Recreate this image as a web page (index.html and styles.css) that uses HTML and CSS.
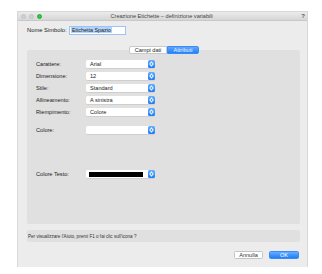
FILE: index.html
```html
<!DOCTYPE html>
<html lang="it">
<head>
  <meta charset="UTF-8">
  <title>Creazione Etichette</title>
  <link rel="stylesheet" href="styles.css">
</head>
<body>
  <div class="window">
    <div class="titlebar">
      <div class="lights">
        <span class="light"></span>
        <span class="light"></span>
        <span class="light green"></span>
      </div>
      <div class="title">Creazione Etichette – definizione variabili</div>
      <div class="help-q">?</div>
    </div>

    <div class="name-row">
      <label>Nome Simbolo:</label>
      <div class="name-input"><span class="sel-text">Etichetta Spazio</span></div>
    </div>

    <div class="tabs">
      <span class="tab">Campi dati</span>
      <span class="tab active">Attributi</span>
    </div>

    <div class="panel">
      <div class="row">
        <label>Carattere:</label>
        <div class="popup"><span>Arial</span><i class="stepper"></i></div>
      </div>
      <div class="row">
        <label>Dimensione:</label>
        <div class="popup"><span>12</span><i class="stepper"></i></div>
      </div>
      <div class="row">
        <label>Stile:</label>
        <div class="popup"><span>Standard</span><i class="stepper"></i></div>
      </div>
      <div class="row">
        <label>Allineamento:</label>
        <div class="popup"><span>A sinistra</span><i class="stepper"></i></div>
      </div>
      <div class="row">
        <label>Riempimento:</label>
        <div class="popup"><span>Colore</span><i class="stepper"></i></div>
      </div>
      <div class="row color-row">
        <label>Colore:</label>
        <div class="popup"><span></span><i class="stepper"></i></div>
      </div>
      <div class="row text-color-row">
        <label>Colore Testo:</label>
        <div class="popup"><span class="swatch"></span><i class="stepper"></i></div>
      </div>
    </div>

    <div class="helpbar">Per visualizzare l'Aiuto, premi F1 o fai clic sull'icona ?</div>

    <div class="buttons">
      <button class="btn">Annulla</button>
      <button class="btn primary">OK</button>
    </div>
  </div>
</body>
</html>
```

FILE: styles.css
```css
body {
  margin: 0;
  background: #fff;
  font-family: "Liberation Sans", Arial, sans-serif;
  color: #222;
}
.window {
  margin: 12px 0 0 18px;
  width: 289px;
  height: 255px;
  background: #ececec;
  box-shadow: 0 0 0 1px #d8d8d8;
  display: flex;
  flex-direction: column;
}
.titlebar {
  height: 8px;
  display: flex;
  align-items: center;
  background: linear-gradient(#ebebeb, #d6d6d6);
  border-bottom: 1px solid #c8c8c8;
}
.lights {
  display: flex;
  gap: 3px;
  margin-left: 3px;
}
.light {
  width: 5px;
  height: 5px;
  border-radius: 50%;
  background: #d0d0d0;
  border: 0.5px solid #c4c4c4;
  box-sizing: border-box;
}
.light.green {
  background: #2ec93f;
  border-color: #27b035;
}
.title {
  flex: 1;
  text-align: center;
  font-size: 5.6px;
  color: #444;
  margin-left: -20px;
}
.help-q {
  font-size: 6px;
  font-weight: bold;
  color: #555;
  margin-right: 2px;
}
.name-row {
  display: flex;
  align-items: center;
  margin: 4px 0 0 9px;
  height: 10px;
}
.name-row label {
  font-size: 5.8px;
  width: 42px;
}
.name-input {
  width: 57px;
  height: 9px;
  background: #fff;
  border: 1px solid #9cc4f2;
  display: flex;
  align-items: center;
  padding-left: 1px;
  box-sizing: border-box;
}
.sel-text {
  font-size: 5.4px;
  background: #b3d4fb;
  padding: 0 1px;
  line-height: 6px;
}
.tabs {
  display: flex;
  justify-content: center;
  margin: 11px 0 0 3px;
  height: 8px;
  position: relative;
  z-index: 1;
}
.tab {
  font-size: 5.6px;
  line-height: 7px;
  padding: 0 4px;
  background: #fff;
  border: 0.5px solid #c9c9c9;
  border-radius: 2px 0 0 2px;
  width: 38px;
  box-sizing: border-box;
  text-align: center;
}
.tab.active {
  width: 32px;
  background: linear-gradient(#5fa8ff, #2280f8);
  color: #eaf3ff;
  border-color: #3a8cf5;
  border-radius: 0 2px 2px 0;
}
.panel {
  margin: -4px 0 0 9px;
  width: 273px;
  height: 174px;
  background: #e0e0e0;
  border-radius: 2px;
  padding: 10px 0 0 9px;
  box-sizing: border-box;
}
.row {
  display: flex;
  align-items: center;
  height: 8px;
  margin-bottom: 4px;
}
.row label {
  font-size: 5.6px;
  width: 50px;
}
.popup {
  width: 69px;
  height: 8px;
  background: #fff;
  border-radius: 1.5px;
  display: flex;
  align-items: center;
  box-shadow: 0 0.5px 0 #bdbdbd;
}
.popup span {
  flex: 1;
  font-size: 5.6px;
  padding-left: 4px;
}
.stepper {
  width: 7px;
  height: 8px;
  border-radius: 1.5px;
  background: linear-gradient(#65aeff, #1f7df6);
  position: relative;
}
.stepper::before,
.stepper::after {
  content: "";
  position: absolute;
  left: 2px;
  width: 2px;
  height: 2px;
  border-left: 0.7px solid #fff;
  border-top: 0.7px solid #fff;
}
.stepper::before {
  top: 1.6px;
  transform: rotate(45deg);
}
.stepper::after {
  bottom: 1.6px;
  transform: rotate(-135deg);
}
.color-row {
  margin-top: 10px;
}
.text-color-row {
  margin-top: 36px;
}
.popup .swatch {
  flex: none;
  width: 54px;
  height: 5px;
  margin: 0 5px 0 3px;
  padding: 0;
  background: #000;
}
.helpbar {
  margin: 6px 0 0 9px;
  width: 273px;
  height: 12px;
  background: #e0e0e0;
  border-radius: 2px;
  font-size: 4.6px;
  display: flex;
  align-items: center;
  padding-left: 1px;
  box-sizing: border-box;
  color: #333;
}
.buttons {
  display: flex;
  justify-content: flex-end;
  gap: 6px;
  margin: 9px 8px 0 0;
}
.btn {
  font-family: "Liberation Sans", Arial, sans-serif;
  font-size: 5.6px;
  height: 8px;
  width: 29px;
  padding: 0;
  border: 0.5px solid #c4c4c4;
  border-radius: 1.5px;
  background: #fff;
  color: #333;
  line-height: 7px;
}
.btn.primary {
  width: 30px;
  background: linear-gradient(#66aeff, #1f7ef7);
  border-color: #3a8cf5;
  color: #fff;
}
```
